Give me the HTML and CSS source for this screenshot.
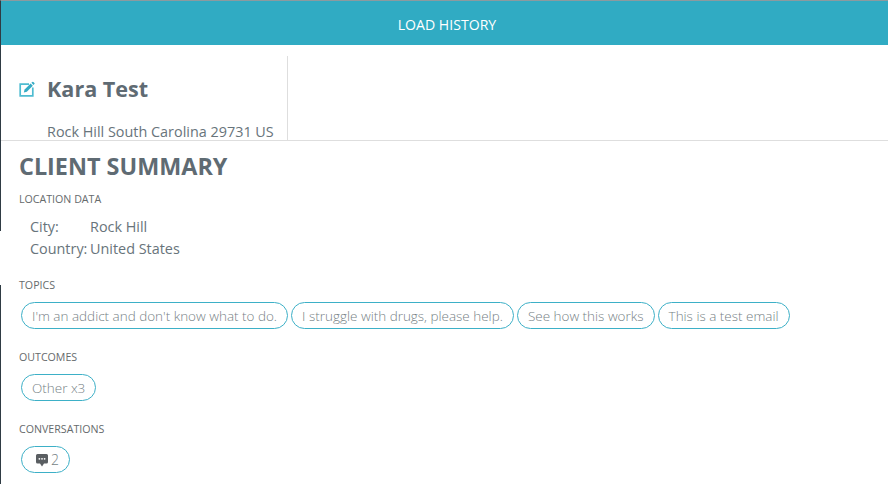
FILE: index.html
```html
<!DOCTYPE html>
<html lang="en">
<head>
<meta charset="utf-8">
<title>Client summary</title>
<link rel="stylesheet" href="styles.css">
</head>
<body>
<div class="page">
  <div class="load-bar">LOAD HISTORY</div>
  <div class="edge-gap"></div>
  <main class="main">
    <header class="client-head">
      <div class="client-card">
        <div class="client-name-row">
          <svg class="edit-icon" viewBox="0 0 16 16" width="16" height="16" aria-hidden="true">
            <path d="M10 3.200H1.200V14.800H13.800V6.500" fill="none" stroke="#4fbcd1" stroke-width="1.700"/>
            <path d="M4.800 11.500l.8-3 6-6 2.200 2.200-6 6z" fill="#35abc4"/>
            <path d="M12.400 1.800l.9-.9a.8.800 0 0 1 1.100 0l1 1a.8.800 0 0 1 0 1.100l-.9.9z" fill="#35abc4"/>
          </svg>
          <h1 class="client-name">Kara Test</h1>
        </div>
        <p class="client-address">Rock Hill South Carolina 29731 US</p>
      </div>
    </header>
    <section class="summary">
      <h2 class="summary-title">CLIENT SUMMARY</h2>
      <h3 class="label">LOCATION DATA</h3>
      <div class="location">
        <span>City:</span><span>Rock Hill</span>
        <span>Country:</span><span>United States</span>
      </div>
      <h3 class="label label-topics">TOPICS</h3>
      <div class="chips">
        <span class="chip">I'm an addict and don't know what to do.</span>
        <span class="chip">I struggle with drugs, please help.</span>
        <span class="chip">See how this works</span>
        <span class="chip">This is a test email</span>
      </div>
      <h3 class="label label-next">OUTCOMES</h3>
      <div class="chips">
        <span class="chip">Other x3</span>
      </div>
      <h3 class="label label-next">CONVERSATIONS</h3>
      <div class="chips">
        <span class="chip chip-convo">
          <svg class="bubble" viewBox="0 0 14 14" width="14" height="14" aria-hidden="true">
            <path d="M2.500 1h9A1.500 1.500 0 0 1 13 2.500v6.500a1.500 1.500 0 0 1-1.500 1.500H9L7 13.500 5 10.500H2.500A1.500 1.500 0 0 1 1 9V2.500A1.500 1.500 0 0 1 2.500 1z" fill="#5a5e62"/>
            <circle cx="4.400" cy="5.800" r=".9" fill="#fff"/>
            <circle cx="7" cy="5.800" r=".9" fill="#fff"/>
            <circle cx="9.600" cy="5.800" r=".9" fill="#fff"/>
          </svg>2</span>
      </div>
    </section>
  </main>
</div>
</body>
</html>
```
FILE: styles.css
```css
* { box-sizing: border-box; }
html, body { margin: 0; padding: 0; background: #fff; }
body {
  font-family: "Open Sans", "Liberation Sans", sans-serif;
  color: #68747b;
  overflow: hidden;
}
.page {
  position: relative;
  width: 888px;
  height: 484px;
  border-top: 1px solid #8c9a9f;
  border-left: 1px solid #2f3b44;
}
.load-bar {
  height: 44px;
  padding-left: 5px;
  background: #30abc3;
  color: #fff;
  font-size: 14.100px;
  line-height: 47px;
  text-align: center;
}
.edge-gap {
  position: absolute;
  left: -1px; top: 230px;
  width: 1px; height: 54px;
  background: #fff;
}
.main { height: 439px; }
.client-head {
  height: 96px;
  padding-top: 11px;
  border-bottom: 1px solid #dedede;
}
.client-card {
  width: 287px;
  height: 84px;
  border-right: 1px solid #dedede;
  padding: 11px 0 0 18px;
}
.client-name-row { display: flex; align-items: center; height: 44px; }
.edit-icon { flex: none; margin-right: 12px; }
.client-name {
  margin: 0;
  font-size: 21.600px;
  font-weight: 700;
  line-height: 44px;
  color: #5f6b73;
}
.client-address {
  margin: 10px 0 0 28px;
  font-size: 14.400px;
  line-height: 22px;
  white-space: nowrap;
}
.summary { padding: 10px 0 0 18px; }
.summary-title {
  margin: 0;
  font-size: 23.400px;
  font-weight: 700;
  line-height: 30px;
  color: #5f6b73;
}
.label {
  margin: 10px 0 0;
  font-size: 10.650px;
  font-weight: 400;
  line-height: 16px;
  color: #666a6c;
}
.label-topics { margin-top: 17px; }
.label-next { margin-top: 20px; }
.location {
  display: grid;
  grid-template-columns: 60px auto;
  justify-content: start;
  margin: 9px 0 0 11px;
  font-size: 14.400px;
  line-height: 22px;
}
.chips { display: flex; gap: 3px; margin: 9px 0 0 2px; }
.chip {
  display: flex;
  align-items: center;
  height: 27px;
  padding: 0 10px;
  border: 1px solid #3db0c7;
  border-radius: 14px;
  font-size: 13.480px;
  font-weight: 300;
  color: #767f85;
  white-space: nowrap;
}
.chip-convo { padding: 0 10px 0 13px; font-size: 14px; }
.bubble { margin-right: 2px; }
```
